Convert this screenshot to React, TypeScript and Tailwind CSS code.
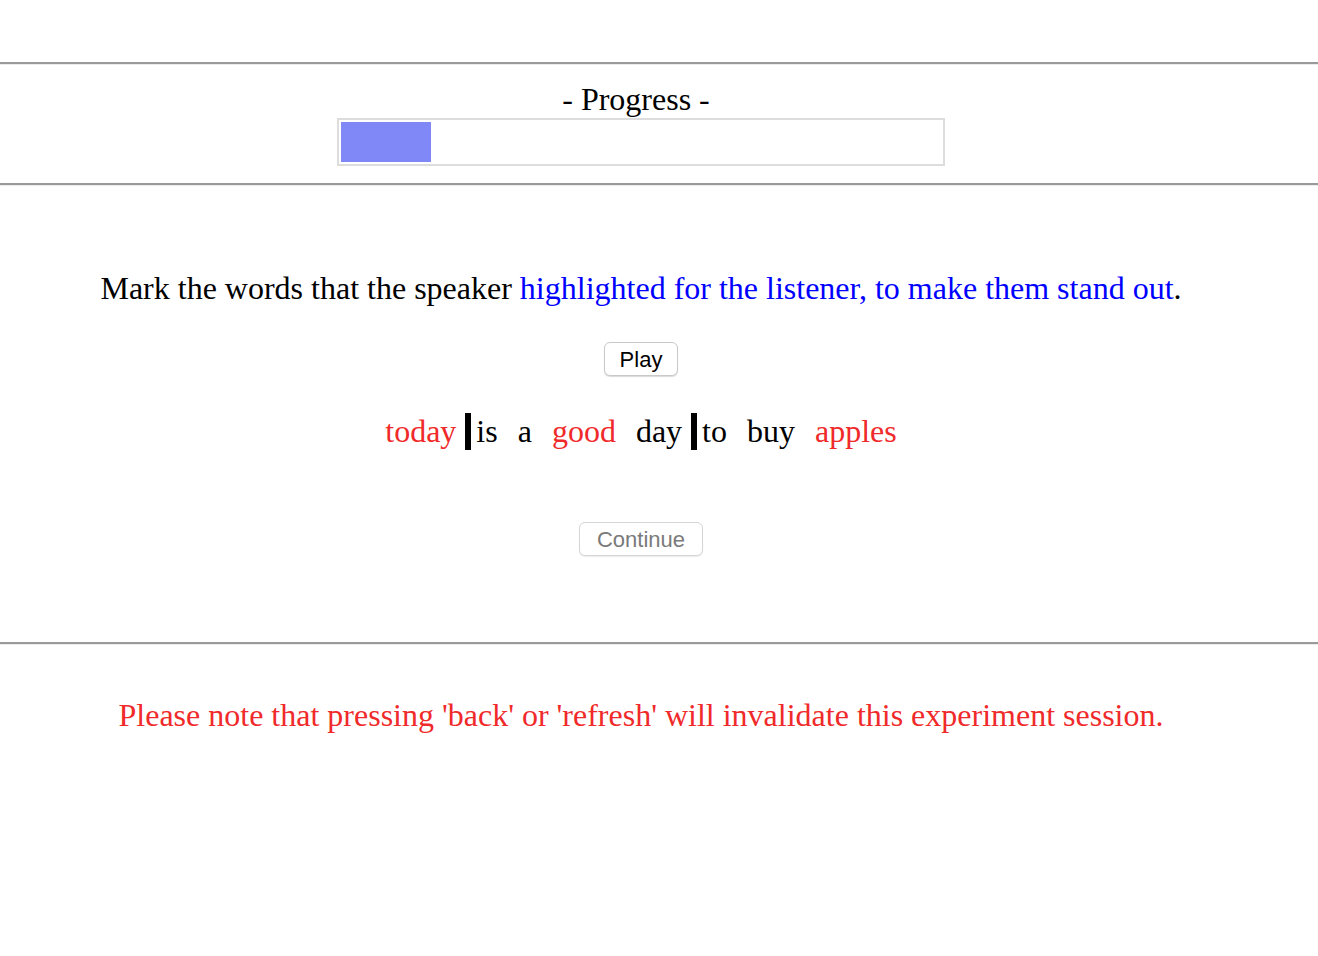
import React from 'react'

const words: { text: string; marked: boolean; barAfter: boolean }[] = [
  { text: 'today', marked: true, barAfter: true },
  { text: 'is', marked: false, barAfter: false },
  { text: 'a', marked: false, barAfter: false },
  { text: 'good', marked: true, barAfter: false },
  { text: 'day', marked: false, barAfter: true },
  { text: 'to', marked: false, barAfter: false },
  { text: 'buy', marked: false, barAfter: false },
  { text: 'apples', marked: true, barAfter: false },
]

function Rule() {
  return <div className="w-full border-t-2 border-b border-t-[#9a9a9a] border-b-[#ececec]" />
}

export default function App() {
  const progress = 15

  return (
    <div className="min-h-[956px] bg-white text-black" style={{ fontFamily: '"Liberation Serif", "Times New Roman", serif' }}>
      <div className="h-[62px]" />
      <Rule />

      {/* Progress */}
      <div className="w-[1282px] flex flex-col items-center pt-[16px] pb-[17px]">
        <div className="text-[32px] leading-[37px] pr-[10px]">- Progress -</div>
        <div className="w-[608px] h-[48px] border-2 border-[#dddddd] p-[2px]">
          <div className="h-full bg-[#8088f8]" style={{ width: `${progress}%` }} />
        </div>
      </div>
      <Rule />

      {/* Task */}
      <div className="w-[1282px] flex flex-col items-center">
        <p className="mt-[83px] text-[32px] leading-[38px]">
          Mark the words that the speaker{' '}
          <span className="text-[#0000ff]">highlighted for the listener, to make them stand out</span>.
        </p>

        <button
          className="mt-[35px] h-[34px] pt-[2px] px-[15px] rounded-[6px] border border-[#c9c9c9] bg-white shadow-[0_1px_1px_rgba(0,0,0,0.15)] text-[22px] leading-none text-black"
          style={{ fontFamily: '"Liberation Sans", Arial, sans-serif' }}
        >
          Play
        </button>

        <div className="mt-[35px] flex items-center h-[40px] text-[32px] leading-[40px]">
          {words.map((w, i) => (
            <React.Fragment key={w.text}>
              <span className={w.marked ? 'text-[#f02a2a]' : 'text-black'}>{w.text}</span>
              {i < words.length - 1 && (
                <span className="w-[20px] h-[37px] flex items-center pl-[9px]">
                  {w.barAfter && <span className="block w-[6px] h-[37px] bg-black" />}
                </span>
              )}
            </React.Fragment>
          ))}
        </div>

        <button
          disabled
          className="mt-[71px] h-[34px] pt-[2px] px-[17px] rounded-[6px] border border-[#d6d6d6] bg-white shadow-[0_1px_1px_rgba(0,0,0,0.08)] text-[22px] leading-none text-[#7a7a7a]"
          style={{ fontFamily: '"Liberation Sans", Arial, sans-serif' }}
        >
          Continue
        </button>
      </div>

      <div className="h-[86px]" />
      <Rule />

      <p className="w-[1282px] text-center mt-[51px] text-[32px] leading-[38px] text-[#f02a2a]">
        Please note that pressing 'back' or 'refresh' will invalidate this experiment session.
      </p>
    </div>
  )
}
